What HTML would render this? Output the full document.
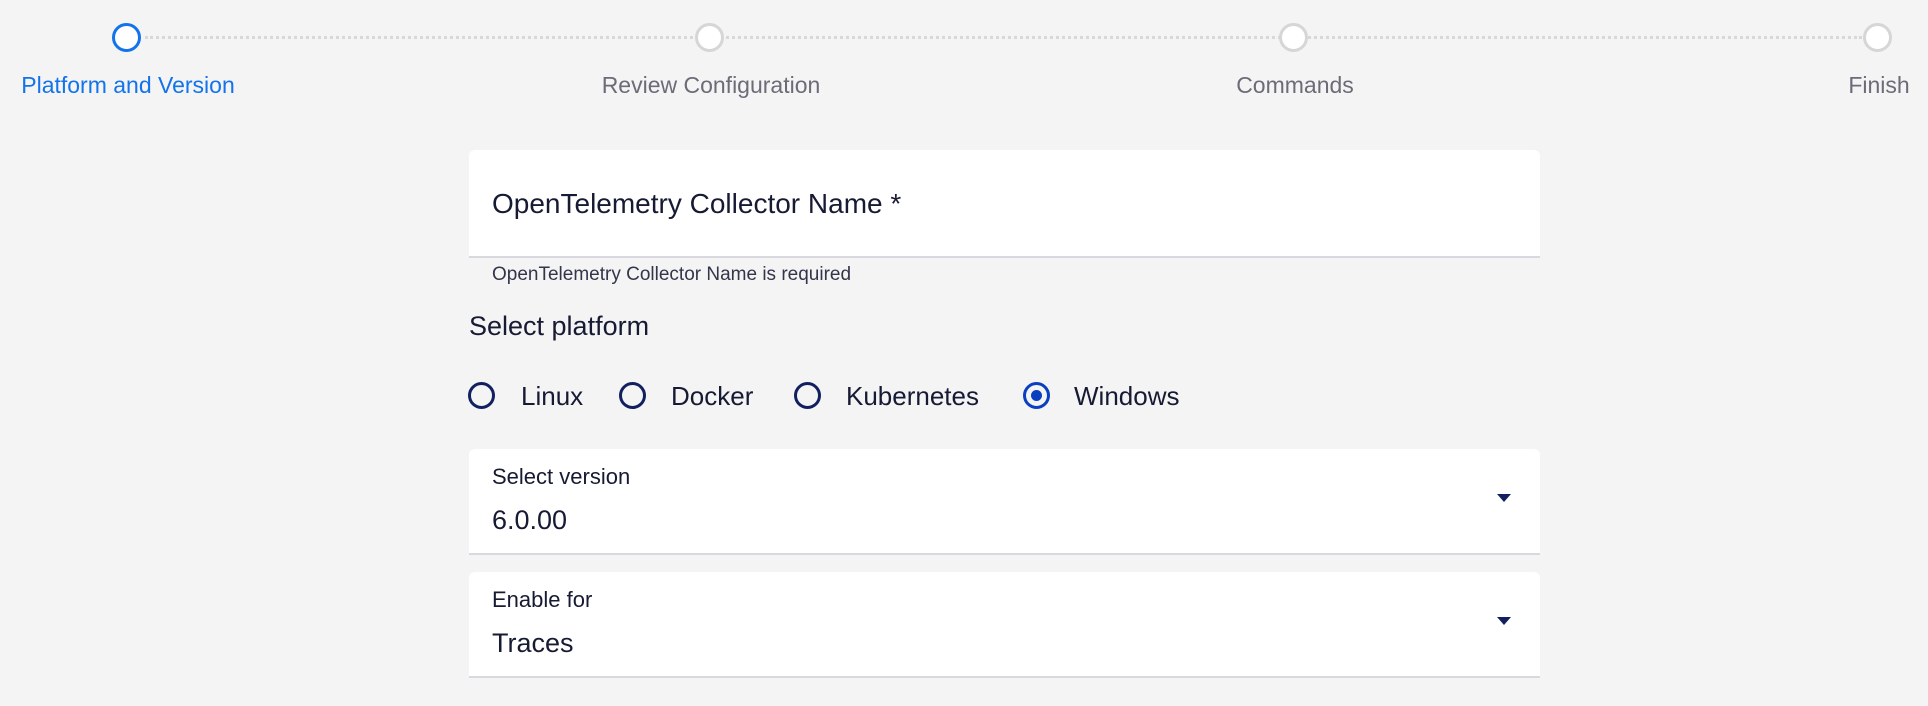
<!DOCTYPE html>
<html><head><style>
body{margin:0;width:1928px;height:706px;background:#f4f4f4;font-family:"Liberation Sans",sans-serif;position:relative;overflow:hidden;color:#161a33}
.a{position:absolute}
.c{position:absolute;width:23px;height:23px;border-radius:50%;border:3px solid #d6d6d6;background:#fff;top:23px}
.l{position:absolute;top:72px;font-size:23px;color:#6b6c78;white-space:nowrap;transform:translateX(-50%)}
.card{position:absolute;left:469px;width:1071px;background:#fff;border-radius:6px 6px 0 0;border-bottom:2px solid #d8d8de}
.r{position:absolute;top:382px;width:27px;height:27px;border-radius:50%;border:3px solid #132060;box-sizing:border-box}
.rl{position:absolute;top:381px;font-size:26px}
.arr{position:absolute;width:0;height:0;border-left:7px solid transparent;border-right:7px solid transparent;border-top:8px solid #132060}
</style></head><body>
<div class="a" style="left:145px;right:66px;top:36px;border-top:3px dotted #d8d8d8"></div>
<div class="c" style="left:112px;border-color:#1273eb"></div>
<div class="c" style="left:695px"></div>
<div class="c" style="left:1279px"></div>
<div class="c" style="left:1863px"></div>
<div class="l" style="left:128px;color:#1273eb">Platform and Version</div>
<div class="l" style="left:711px">Review Configuration</div>
<div class="l" style="left:1295px">Commands</div>
<div class="l" style="left:1879px">Finish</div>

<div class="card" style="top:150px;height:106px"><div class="a" style="left:23px;top:38px;font-size:28px">OpenTelemetry Collector Name *</div></div>
<div class="a" style="left:492px;top:264px;font-size:19px;color:#33364a">OpenTelemetry Collector Name is required</div>
<div class="a" style="left:469px;top:311px;font-size:27px">Select platform</div>

<div class="r" style="left:468px"></div><div class="rl" style="left:521px">Linux</div>
<div class="r" style="left:619px"></div><div class="rl" style="left:671px">Docker</div>
<div class="r" style="left:794px"></div><div class="rl" style="left:846px">Kubernetes</div>
<div class="r" style="left:1023px;border-color:#0a3fc0"><div class="a" style="left:5px;top:5px;width:11px;height:11px;border-radius:50%;background:#0a3fc0"></div></div><div class="rl" style="left:1074px">Windows</div>

<div class="card" style="top:449px;height:104px">
<div class="a" style="left:23px;top:15px;font-size:22px">Select version</div>
<div class="a" style="left:23px;top:56px;font-size:27px">6.0.00</div>
<div class="arr" style="left:1028px;top:45px"></div></div>
<div class="card" style="top:572px;height:104px">
<div class="a" style="left:23px;top:15px;font-size:22px">Enable for</div>
<div class="a" style="left:23px;top:56px;font-size:27px">Traces</div>
<div class="arr" style="left:1028px;top:45px"></div></div>
</body></html>
